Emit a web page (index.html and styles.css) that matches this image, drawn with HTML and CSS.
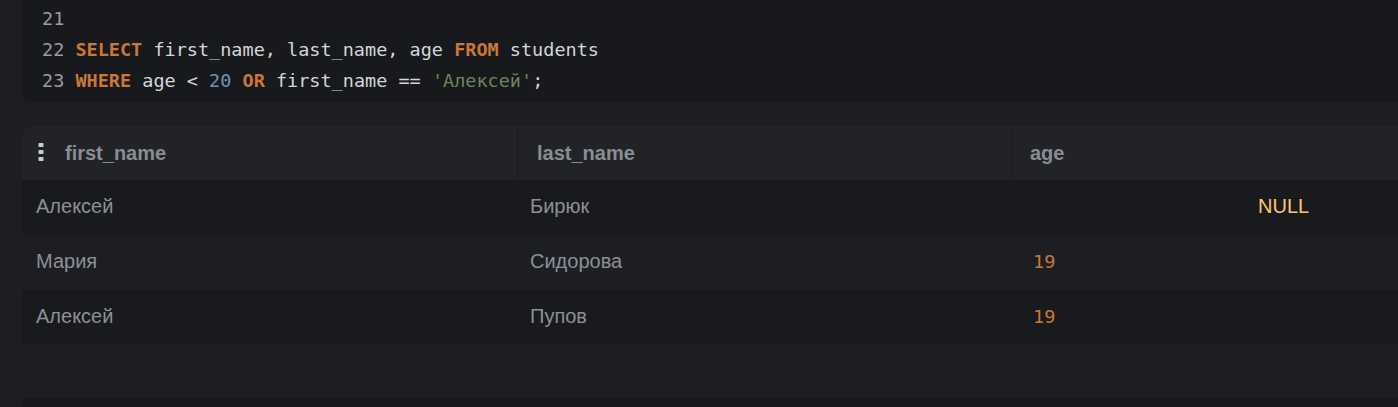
FILE: index.html
```html
<!DOCTYPE html>
<html lang="ru">
<head>
<meta charset="utf-8">
<title>SQL</title>
<link rel="stylesheet" href="styles.css">
</head>
<body>
<div class="page">
  <div class="code">
    <div class="line"><span class="ln">21</span></div>
    <div class="line"><span class="ln">22</span> <span class="kw">SELECT</span> first_name, last_name, age <span class="kw">FROM</span> students</div>
    <div class="line"><span class="ln">23</span> <span class="kw">WHERE</span> age &lt; <span class="num">20</span> <span class="kw">OR</span> first_name == <span class="str">'Алексей'</span>;</div>
  </div>

  <div class="table">
    <div class="row head">
      <div class="cell c1"><svg class="grip" width="6" height="20" viewBox="0 0 6 20"><rect x="0.5" y="1" width="5" height="4" rx="0.8"/><rect x="0.5" y="8" width="5" height="4" rx="0.8"/><rect x="0.5" y="15" width="5" height="4" rx="0.8"/></svg><span>first_name</span></div>
      <div class="cell c2">last_name</div>
      <div class="cell c3">age</div>
    </div>
    <div class="row dark">
      <div class="cell c1">Алексей</div>
      <div class="cell c2">Бирюк</div>
      <div class="cell c3"><span class="null">NULL</span></div>
    </div>
    <div class="row light">
      <div class="cell c1">Мария</div>
      <div class="cell c2">Сидорова</div>
      <div class="cell c3"><span class="n">19</span></div>
    </div>
    <div class="row dark">
      <div class="cell c1">Алексей</div>
      <div class="cell c2">Пупов</div>
      <div class="cell c3"><span class="n">19</span></div>
    </div>
  </div>

  <div class="next"></div>
</div>
</body>
</html>
```

FILE: styles.css
```css
html, body {
  margin: 0;
  padding: 0;
  background: #1d1e22;
  overflow: hidden;
  height: 407px;
}
.page {
  padding-left: 22px;
  display: flex;
  flex-direction: column;
}
.code {
  background: #18191d;
  margin-right: -40px;
  border-radius: 0 0 0 10px;
  padding: 3px 0 6px 20px;
  font-family: "DejaVu Sans Mono", "Liberation Mono", monospace;
  font-size: 18.5px;
  color: #d3d6da;
}
.line {
  height: 31px;
  line-height: 31px;
  white-space: pre;
}
.ln { color: #9a9da3; }
.kw { color: #cc7832; font-weight: bold; }
.num { color: #6897bb; }
.str { color: #6a8759; }

.table {
  margin-top: 24px;
  margin-right: -40px;
  font-family: "Liberation Sans", Arial, sans-serif;
  font-size: 20px;
  color: #8d9095;
}
.row {
  display: grid;
  grid-template-columns: 495px 494px 1fr;
  height: 55px;
  align-items: stretch;
}
.row.head {
  height: 54px;
  background: #222327;
  border-radius: 10px 0 0 0;
  font-weight: bold;
  color: #888d94;
}
.row.dark { background: #191a1e; }
.row.light { background: #1d1e23; }
.row:last-child { height: 54px; }
.cell {
  display: flex;
  align-items: center;
  padding-left: 14px;
}
.row.dark .cell, .row.light .cell { padding-bottom: 2px; }
.row .c2 { padding-left: 13px; }
.row .c3 { padding-left: 22px; }
.row.head .cell { padding-bottom: 0; }
.row.head .c1 { padding-left: 16px; gap: 21px; }
.row.head .c2 { border-left: 1px solid #1b1c20; padding-left: 19px; }
.row.head .c3 { border-left: 1px solid #1b1c20; padding-left: 18px; }
.grip { fill: #c9cdd2; margin-top: -2px; }
.n {
  font-family: "DejaVu Sans Mono", "Liberation Mono", monospace;
  font-size: 18.5px;
  color: #cc7832;
}
.null {
  color: #ffc66d;
  margin-left: 225px;
}
.next {
  margin-top: 54px;
  margin-right: -40px;
  height: 9px;
  background: #18191d;
}
```
